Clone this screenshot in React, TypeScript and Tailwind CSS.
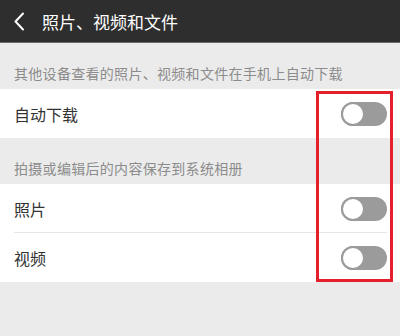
import React from "react";

function Toggle() {
  return (
    <div className="relative w-[46px] h-[24px] rounded-full bg-[#9b9b9b]">
      <div className="absolute left-0 top-0 w-[24px] h-[24px] rounded-full bg-white border-[2px] border-[#9b9b9b]" />
    </div>
  );
}

function Row({ label, divider }: { label: string; divider?: boolean }) {
  return (
    <div className="relative bg-white h-[49px] flex items-center justify-between pl-[14px] pr-[13px]">
      <span className="text-[16px] text-[#333333] leading-none">{label}</span>
      <Toggle />
      {divider && <div className="absolute left-[14px] right-[13px] bottom-0 h-px bg-[#e6e6e6]" />}
    </div>
  );
}

export default function App() {
  return (
    <div
      className="relative w-[400px] h-[336px] bg-[#ebebeb] overflow-hidden"
      style={{ fontFamily: '"Noto Sans CJK SC", "Noto Sans", sans-serif' }}
    >
      <div className="h-[43px] bg-[#2e2e2e] border-b border-[#6a6a6a] flex items-center">
        <svg width="40" height="42" viewBox="0 0 40 42" className="shrink-0">
          <path d="M23 13.5 L15.5 21.5 L23 29.5" fill="none" stroke="#ffffff" strokeWidth="2" strokeLinecap="round" strokeLinejoin="round" />
        </svg>
        <span className="ml-[2px] text-[17px] text-white leading-none">照片、视频和文件</span>
      </div>
      <div className="h-[46px] flex items-end pl-[14px] pb-[9px]">
        <span className="text-[14px] text-[#8c8c8c] leading-none tracking-[0.3px]">其他设备查看的照片、视频和文件在手机上自动下载</span>
      </div>
      <Row label="自动下载" />
      <div className="h-[46px] flex items-end pl-[14px] pb-[9px]">
        <span className="text-[14px] text-[#8c8c8c] leading-none tracking-[0.3px]">拍摄或编辑后的内容保存到系统相册</span>
      </div>
      <Row label="照片" divider />
      <Row label="视频" />
      <div className="absolute left-[316px] top-[91px] w-[77px] h-[191px] border-[3px] border-[#e3202b]" />
    </div>
  );
}
